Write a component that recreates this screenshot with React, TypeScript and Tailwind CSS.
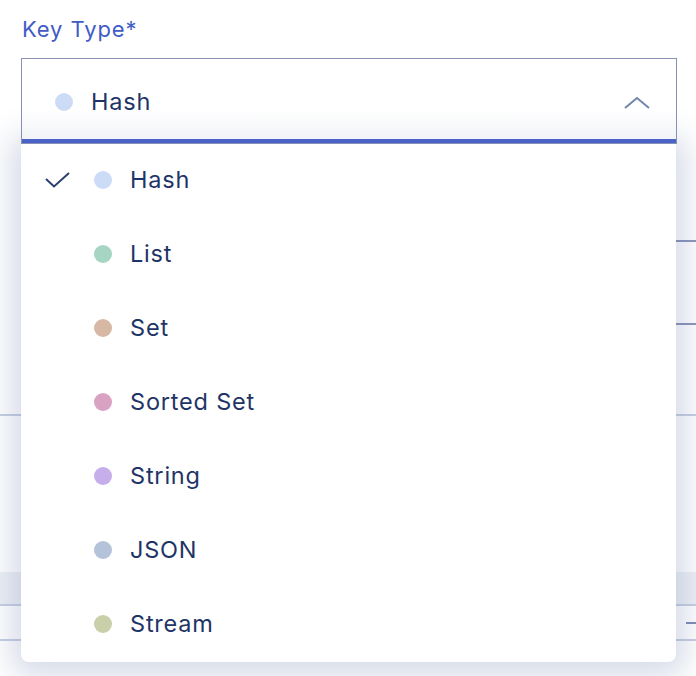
import React from "react";

const items = [
  { label: "Hash", color: "#cddcf6", checked: true },
  { label: "List", color: "#a6d5c3" },
  { label: "Set", color: "#d6b8a5" },
  { label: "Sorted Set", color: "#d9a1c2" },
  { label: "String", color: "#c6aeeb" },
  { label: "JSON", color: "#b5c3da" },
  { label: "Stream", color: "#c9cfa8" },
];

export default function App() {
  return (
    <div
      className="relative w-[696px] h-[676px] overflow-hidden bg-white"
      style={{ fontFamily: "Inter, 'Noto Sans', sans-serif" }}
    >
      <div className="pl-[22px] pt-[14px] text-[22px] leading-[30px] text-[#3f5bc6] tracking-[0.9px]">
        Key Type*
      </div>
      <div className="relative z-10 mt-[14px] ml-[21px] w-[656px] h-[86px] border border-[#8891b4] bg-gradient-to-b from-white from-60% to-[#f0f2f7] flex items-center">
        <div className="flex items-center pl-[33px] pt-[2px]">
          <span className="w-[18px] h-[18px] rounded-full bg-[#cddcf6]" />
          <span className="ml-[18px] text-[23.5px] text-[#1f3466] tracking-[0.8px]">Hash</span>
        </div>
        <svg className="ml-auto mr-[25px] mt-[4px]" width="28" height="14" viewBox="0 0 28 14">
          <path d="M2 12 L14 2 L26 12" fill="none" stroke="#7086ad" strokeWidth="2" />
        </svg>
        <div className="absolute left-0 right-0 bottom-0 h-[4px] bg-[#4a63c6]" />
      </div>

      {/* background page content behind the menu */}
      <div className="flex flex-col">
        <div className="h-[96px]" />
        <div className="ml-[21px] h-[2px] bg-[#8d97ba]" />
        <div className="h-[81px]" />
        <div className="ml-[21px] h-[2px] bg-[#8d97ba]" />
        <div className="h-[89px]" />
        <div className="h-[2px] bg-[#c8d0e2]" />
        <div className="h-[156px]" />
        <div className="h-[32px] bg-[#eef1f6]" />
        <div className="h-[2px] bg-[#c8d0e2]" />
        <div className="h-[33px] flex items-center justify-end">
          <div className="w-[10px] h-[2px] bg-[#7d8fb6]" />
        </div>
        <div className="h-[2px] bg-[#c8d0e2]" />
      </div>

      {/* dropdown menu */}
      <div className="absolute left-[21px] top-[143px] w-[655px] h-[519px] bg-white rounded-b-[8px] shadow-[0_4px_30px_10px_rgba(70,90,150,0.22)] flex flex-col">
        {items.map((it) => (
          <div key={it.label} className="h-[74px] shrink-0 flex items-center pb-[1px]">
            <div className="w-[73px] flex justify-center">
              {it.checked && (
                <svg width="26" height="16" viewBox="0 0 26 16">
                  <path d="M1 7 L9 14.5 L24 1" fill="none" stroke="#2b3f6e" strokeWidth="2" />
                </svg>
              )}
            </div>
            <span className="w-[18px] h-[18px] rounded-full" style={{ backgroundColor: it.color }} />
            <span className="ml-[18px] text-[23.5px] text-[#1f3466] tracking-[0.8px]">{it.label}</span>
          </div>
        ))}
      </div>
    </div>
  );
}
